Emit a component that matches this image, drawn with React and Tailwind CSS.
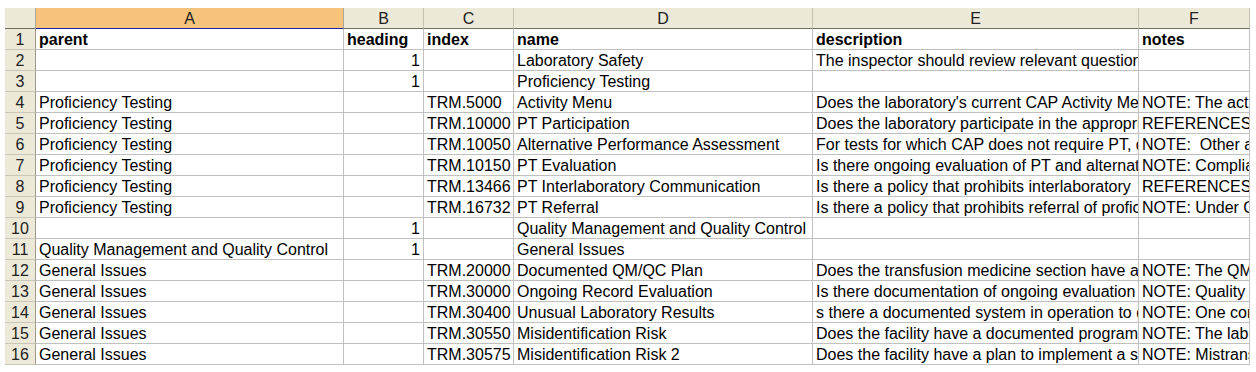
// Excel 2003 style sheet view: column headers, row numbers and a grid of clipped cells

const columnas = ["A", "B", "C", "D", "E", "F"];

// first row is the bold header row of the sheet
const filas = [
  ["parent", "heading", "index", "name", "description", "notes"],
  ["", "1", "", "Laboratory Safety", "The inspector should review relevant questions from the General Checklist", ""],
  ["", "1", "", "Proficiency Testing", "", ""],
  ["Proficiency Testing", "", "TRM.5000", "Activity Menu", "Does the laboratory's current CAP Activity Menu accurately reflect the testing performed?", "NOTE: The activity menu must include"],
  ["Proficiency Testing", "", "TRM.10000", "PT Participation", "Does the laboratory participate in the appropriate required PT/EQA program?", "REFERENCES: 1) Department of Health"],
  ["Proficiency Testing", "", "TRM.10050", "Alternative Performance Assessment", "For tests for which CAP does not require PT, does the laboratory", "NOTE:  Other alternative assessment"],
  ["Proficiency Testing", "", "TRM.10150", "PT Evaluation", "Is there ongoing evaluation of PT and alternative assessment results", "NOTE: Compliance with this requirement"],
  ["Proficiency Testing", "", "TRM.13466", "PT Interlaboratory Communication", "Is there a policy that prohibits interlaboratory  communication about PT", "REFERENCES: 1) Department of Health"],
  ["Proficiency Testing", "", "TRM.16732", "PT Referral", "Is there a policy that prohibits referral of proficiency testing specimens", "NOTE: Under CLIA, laboratories"],
  ["", "1", "", "Quality Management and Quality Control", "", ""],
  ["Quality Management and Quality Control", "1", "", "General Issues", "", ""],
  ["General Issues", "", "TRM.20000", "Documented QM/QC Plan", "Does the transfusion medicine section have a documented QM/QC plan?", "NOTE: The QM/QC plan must"],
  ["General Issues", "", "TRM.30000", "Ongoing Record Evaluation", "Is there documentation of ongoing evaluation of records", "NOTE: Quality control records"],
  ["General Issues", "", "TRM.30400", "Unusual Laboratory Results", "s there a documented system in operation to detect and correct", "NOTE: One common way"],
  ["General Issues", "", "TRM.30550", "Misidentification Risk", "Does the facility have a documented program to reduce the risk", "NOTE: The laboratory"],
  ["General Issues", "", "TRM.30575", "Misidentification Risk 2", "Does the facility have a plan to implement a system", "NOTE: Mistransfusion"],
];

function Celda({ texto, numero, negrita }) {
  return (
    <div
      className={
        "h-[21px] overflow-hidden whitespace-pre border-r border-b border-[#c0c0c0] px-[3px] leading-[22px] text-black " +
        (numero ? "text-right " : "text-left ") +
        (negrita ? "font-bold" : "")
      }
    >
      {texto}
    </div>
  );
}

export default function App() {
  return (
    <div
      className="h-[372px] w-[1256px] overflow-hidden bg-white pl-[5px] pt-[8px] text-[16px]"
      style={{ fontFamily: '"Liberation Sans", Arial, sans-serif' }}
    >
      <div className="grid grid-cols-[31px_308px_80px_90px_299px_326px_111px]">
        {/* esquina y cabeceras de columna */}
        <div className="h-[21px] border-r border-b border-r-[#aca899] border-b-[#716f64] bg-[#ece9d8]" />
        {columnas.map((letra) => (
          <div
            key={letra}
            className={
              "h-[21px] border-r border-b text-center leading-[21px] text-[#222] " +
              (letra === "A"
                ? "border-r-[#aca899] border-b-[#22229c] bg-[#f6c37d]"
                : "border-r-[#c5c2b2] border-b-[#716f64] bg-[#ece9d8]")
            }
          >
            {letra}
          </div>
        ))}

        {filas.map((fila, i) => (
          <div key={i} className="contents">
            <div className="h-[21px] overflow-hidden border-r border-b border-r-[#9d9a8b] border-b-[#cbc7b8] bg-[#ece9d8] text-center leading-[22px] text-[#222]">
              {i + 1}
            </div>
            {fila.map((texto, j) => (
              <Celda key={j} texto={texto} numero={j === 1 && i > 0} negrita={i === 0} />
            ))}
          </div>
        ))}
      </div>
    </div>
  );
}
